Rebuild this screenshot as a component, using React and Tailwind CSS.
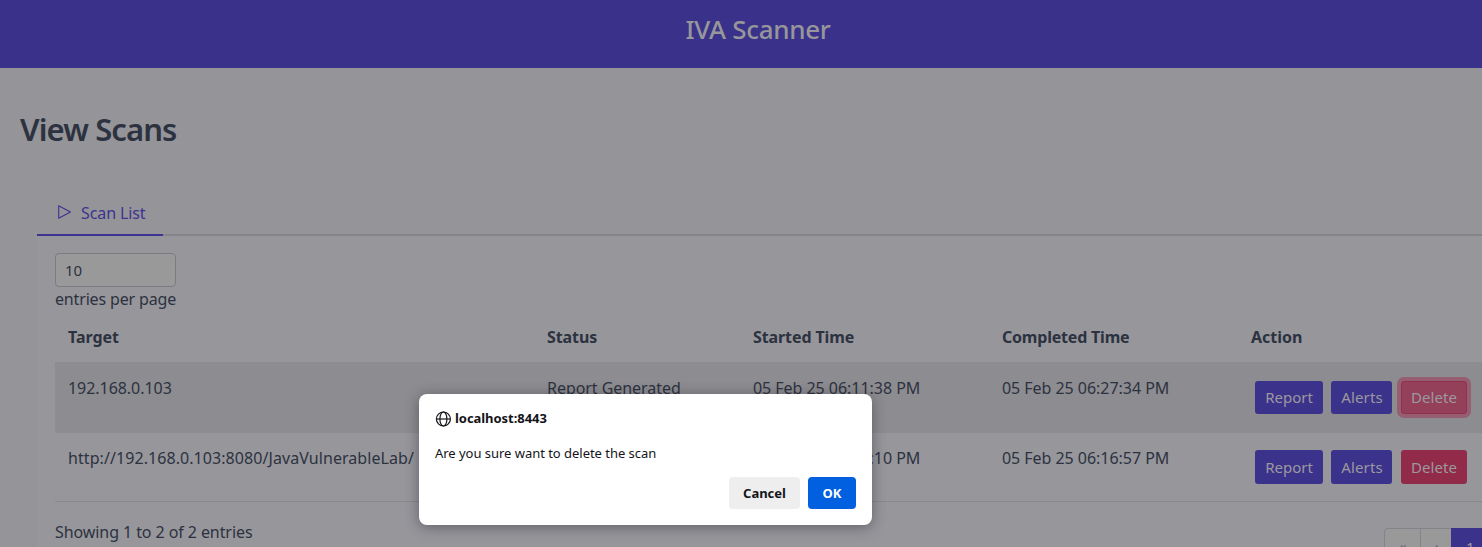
const scans = [
  { target: "192.168.0.103", started: "05 Feb 25 06:11:38 PM", completed: "05 Feb 25 06:27:34 PM", targetClass: "tracking-[-0.05px]", active: true },
  { target: "http://192.168.0.103:8080/JavaVulnerableLab/", started: "05 Feb 25 06:11:10 PM", completed: "05 Feb 25 06:16:57 PM", targetClass: "tracking-[0.07px]", active: false },
];

const columns = "grid grid-cols-[479px_206px_249px_249px_244px] pl-[13px]";

function ScanRow({ scan }) {
  const cell = scan.active ? "pt-3.5" : "pt-[13px]";
  const buttonSize = scan.active ? "h-[33px] pb-px" : "h-[34px]";
  return (
    <div className={`${columns} ${scan.active ? "h-[71px] bg-[#8d8c90]" : "h-[69px] border-b border-[#89888d]"}`}>
      <div className={`${cell} ${scan.targetClass}`}>{scan.target}</div>
      <div className={`${cell} tracking-[-0.05px]`}>Report Generated</div>
      <div className={`${cell} tracking-[-0.04px]`}>{scan.started}</div>
      <div className={`${cell} tracking-[-0.04px]`}>{scan.completed}</div>
      <div className={`flex items-start pl-1 text-[15px] text-[#9b999f] ${scan.active ? "pt-[19px]" : "pt-[17px]"}`}>
        <button className={`mr-2 w-[68px] rounded-[3px] bg-[#3b328b] ${buttonSize}`}>Report</button>
        <button className={`mr-[9px] w-[61px] rounded-[3px] bg-[#3b328b] pl-px tracking-[0.15px] ${buttonSize}`}>Alerts</button>
        <button
          className={`w-[66px] rounded-[3px] tracking-[0.1px] ${buttonSize} ${
            scan.active
              ? "border border-[#91304f] bg-[#94405a] ring-4 ring-[#955e71]"
              : "bg-[#922b4a]"
          }`}
        >
          Delete
        </button>
      </div>
    </div>
  );
}

function ConfirmDialog() {
  return (
    <div className="absolute left-[419px] top-[394px] h-[131px] w-[453px] rounded-lg bg-white px-4 pt-4 font-['Noto_Sans',sans-serif] text-[13px] text-[#15141a] shadow-[0_2px_14px_rgba(30,28,40,0.45)]">
      <div className="flex h-[17px] items-center gap-1 font-bold">
        <svg className="h-4 w-4 shrink-0" viewBox="0 0 16 16" fill="none" stroke="currentColor" strokeWidth="1.2">
          <circle cx="8.4" cy="8" r="7" />
          <ellipse cx="8.4" cy="8" rx="3.5" ry="7" />
          <path d="M1.4 8h14" />
        </svg>
        <span className="pb-0.5 tracking-[-0.05px]">localhost:8443</span>
      </div>
      <p className="mt-4 leading-5 tracking-[-0.03px]">Are you sure want to delete the scan</p>
      <div className="mt-3.5 flex justify-end gap-2 font-bold">
        <button className="h-8 w-[71px] rounded bg-[#eeeeee]">Cancel</button>
        <button className="h-8 w-12 rounded bg-[#0060df] text-white">OK</button>
      </div>
    </div>
  );
}

export default function App() {
  return (
    <div className="relative h-[547px] w-[1482px] overflow-hidden bg-[#959498] font-['Noto_Sans',sans-serif] text-base leading-6 text-[#2c3240]">
      <header className="flex h-[68px] justify-center bg-[#3a328a] pl-[34px] pt-[11px]">
        <span className="h-9 text-[26px] font-medium leading-9 tracking-[-0.3px] text-[#97969a]">IVA Scanner</span>
      </header>
      <h1 className="mt-[39px] pl-5 text-[31px] font-semibold leading-[44px] tracking-[-0.9px]">View Scans</h1>
      <div className="ml-[37px] mt-[41px]">
        <div className="flex h-11 border-b-2 border-[#858489]">
          <div className="flex h-11 w-[126px] items-start gap-[9px] border-b-2 border-[#3d3391] pl-5 pt-[9px] text-[#3d3391]">
            <svg className="mt-[3px] h-4 w-[15px]" viewBox="0 0 15 16" fill="none" stroke="currentColor" strokeWidth="1.1" strokeLinejoin="round">
              <path d="M1.7 1.7v12.6L13.4 8Z" />
            </svg>
            <span className="whitespace-nowrap tracking-[-0.1px]">Scan List</span>
          </div>
        </div>
        <div className="h-[311px] bg-[#97969b] pl-[18px] pt-[17px]">
          <div className="flex h-[34px] w-[121px] items-center rounded border border-[#7c7b83] bg-[#99999a] pl-[9px] text-[15px]">10</div>
          <div className="whitespace-nowrap tracking-[-0.16px]">entries per page</div>
          <div className="mt-0.5 w-[1440px]">
            <div className={`${columns} h-[49px] pt-3 font-bold`}>
              <div className="tracking-[-0.05px]">Target</div>
              <div className="tracking-[-0.1px]">Status</div>
              <div className="tracking-[-0.1px]">Started Time</div>
              <div className="tracking-[-0.2px]">Completed Time</div>
              <div>Action</div>
            </div>
            {scans.map((scan) => (
              <ScanRow key={scan.target} scan={scan} />
            ))}
          </div>
          <div className="flex h-[45px] w-[1427px] justify-between pt-[18px]">
            <span className="tracking-[-0.08px]">Showing 1 to 2 of 2 entries</span>
            <nav className="mt-2 flex h-9 overflow-hidden rounded-tl text-[15px] text-[#67676e]">
              <span className="w-9 rounded-tl border-l border-t border-[#84838a] bg-[#99999a] pt-[5px] text-center">«</span>
              <span className="w-[31px] border-l border-t border-[#84838a] bg-[#99999a] pt-[5px] text-center">‹</span>
              <span className="w-[31px] bg-[#3b328b] pl-[15px] pt-[7px] text-[#9b999f]">1</span>
            </nav>
          </div>
        </div>
      </div>
      <ConfirmDialog />
    </div>
  );
}
